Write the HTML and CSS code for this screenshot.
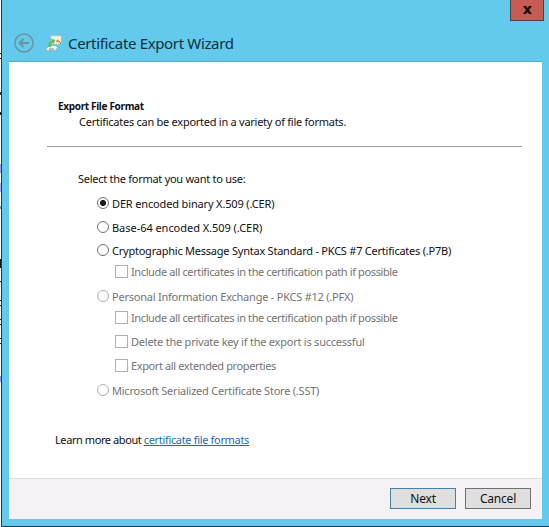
FILE: index.html
```
<!DOCTYPE html>
<html lang="en">
<head>
    <meta charset="UTF-8">
    <meta name="viewport" content="width=device-width, initial-scale=1.0">
    <title>Certificate Export Wizard</title>
    <link rel="stylesheet" href="styles.css">
</head>
<body>

<div class="window">
    <!-- Title bar -->
    <header class="titlebar">
        <button class="close" aria-label="Close">
            <svg width="9" height="8" viewBox="0 0 9 8"><path d="M0 0h3l1.5 2L6 0h3L6 4l3 4H6L4.500 6 3 8H0l3-4z" fill="#1a0c0e"/></svg>
        </button>
        <div class="caption">
            <svg class="back" width="20" height="20" viewBox="0 0 20 20" fill="none" stroke="#6f929f">
                <circle cx="10" cy="10" r="9" stroke-width="1.5"/>
                <path d="M15 10H6M9.500 6L5.500 10l4 4" stroke-width="2.200"/>
            </svg>
            <svg class="cert" width="17" height="17" viewBox="0 0 17 17">
                <path d="M6 1h10v8H6z" fill="#f8f5e4" stroke="#d6d4b4" stroke-width=".6"/>
                <path d="M1 14.500l3-4h6l3 2-3 3H2z" fill="#f0f3ea" stroke="#8ba9a2" stroke-width=".6"/>
                <path d="M3 11.500C3.500 8.500 4.500 7 6.500 5.500L6 4l4 1-1.500 4-1-1.500C6 9 6 10 6 12z" fill="#5dc060" stroke="#5dc060" stroke-width=".5"/>
                <circle cx="12.500" cy="6" r="1.500" fill="#e39a3c"/>
                <path d="M14 6l2 3" stroke="#7c6c64"/>
                <path d="M4 14h5" stroke="#6d8791"/>
            </svg>
            <h1>Certificate Export Wizard</h1>
        </div>
    </header>

    <main class="page">
        <h2>Export File Format</h2>
        <p class="subtitle">Certificates can be exported in a variety of file formats.</p>
        <hr>
        <p class="prompt">Select the format you want to use:</p>

        <!-- Export formats -->
        <form class="formats">
            <label class="option der"><input type="radio" name="format" checked><span>DER encoded binary X.509 (.CER)</span></label>
            <label class="option base64"><input type="radio" name="format"><span>Base-64 encoded X.509 (.CER)</span></label>
            <label class="option pkcs7"><input type="radio" name="format"><span>Cryptographic Message Syntax Standard - PKCS #7 Certificates (.P7B)</span></label>
            <label class="option sub include"><input type="checkbox" disabled><span>Include all certificates in the certification path if possible</span></label>
            <label class="option pfx disabled"><input type="radio" name="format" disabled><span>Personal Information Exchange - PKCS #12 (.PFX)</span></label>
            <label class="option sub include"><input type="checkbox" disabled><span>Include all certificates in the certification path if possible</span></label>
            <label class="option sub delete"><input type="checkbox" disabled><span>Delete the private key if the export is successful</span></label>
            <label class="option sub extended"><input type="checkbox" disabled><span>Export all extended properties</span></label>
            <label class="option sst disabled"><input type="radio" name="format" disabled><span>Microsoft Serialized Certificate Store (.SST)</span></label>
        </form>

        <p class="learn">Learn more about <a href="#">certificate file formats</a></p>
    </main>

    <footer class="buttons">
        <button class="btn default">Next</button>
        <button class="btn">Cancel</button>
    </footer>
</div>

</body>
</html>
```
FILE: styles.css
```
* {
    box-sizing: border-box;
}
body {
    margin: 0;
    height: 527px;
    padding-left: 1px;
    overflow: hidden;
    font-family: "Noto Sans", sans-serif;
    font-size: 11px;
    color: #101014;
    /* edge of the window that lies behind the dialog */
    background: linear-gradient(#fff 53px, #222 53px 54px, #fff 54px 58px, #222 58px 59px, #fff 59px 92px, #333 92px 95px, #fff 95px 112px, #222 112px 115px, #fff 115px 164px, #9aa9d8 164px 173px, #fff 173px 183px, #a9b3e0 183px 192px, #fff 192px 206px, #6f9fc0 206px 209px, #fff 209px 259px, #14141c 259px 268px, #fff 268px 281px, #222 281px 282px, #fff 282px 300px, #222 300px 301px, #fff 301px 305px, #222 305px 306px, #fff 306px 319px, #222 319px 320px, #fff 320px 324px, #222 324px 325px, #fff 325px 338px, #222 338px 339px, #fff 339px 343px, #222 343px 344px, #fff 344px 376px, #86a3e0 376px 382px, #fff 382px);
}
h1, h2, p {
    margin: 0;
    font-weight: normal;
    white-space: nowrap;
}
.window {
    height: 527px;
    display: flex;
    flex-direction: column;
    padding: 0 7px 7px;
    background-color: #63caed;
    border-left: 1px solid #163e4c;
    border-bottom: 1px solid #163e4c;
}
.titlebar {
    height: 62px;
    display: flex;
    flex-direction: column;
    border-bottom: 1px solid #67a5bc;
}
.close {
    align-self: flex-end;
    width: 34px;
    height: 21px;
    margin-right: -2px;
    padding: 0;
    display: flex;
    justify-content: center;
    align-items: center;
    background-color: #c75b56;
    border: 1px solid #53404a;
    border-top: none;
}
.caption {
    display: flex;
    align-items: center;
    height: 40px;
    padding: 4px 0 0 5px;
}
.cert {
    margin-left: 11px;
}
h1 {
    margin-left: 6px;
    font-size: 15px;
    line-height: 22px;
    letter-spacing: -0.35px;
    color: #10303d;
}
.page {
    height: 416px;
    padding-top: 35px;
    background-color: #fff;
}
h2 {
    margin-left: 49px;
    font-size: 10px;
    font-weight: bold;
    line-height: 18px;
    letter-spacing: -0.33px;
}
.subtitle {
    margin: -1px 0 0 70px;
    line-height: 16px;
    letter-spacing: -0.26px;
}
hr {
    width: 475px;
    height: 1px;
    margin: 16px 0 0 38px;
    border: none;
    background-color: #9b9b9b;
}
.prompt {
    margin: 22px 0 0 69px;
    line-height: 20px;
    letter-spacing: -0.27px;
}
.formats {
    display: flex;
    flex-direction: column;
    margin: 4px 0 0 88px;
}
.option {
    display: flex;
    align-items: center;
    height: 20px;
    white-space: nowrap;
    letter-spacing: -0.23px;
}
.option input {
    appearance: none;
    flex: none;
    width: 12px;
    height: 12px;
    margin: 0 3px 0 0;
    border: 1px solid #707070;
    border-radius: 50%;
    background-color: #fff;
}
.option input:checked {
    background: radial-gradient(circle, #1c1c1c 2.7px, #fff 3.4px);
}
.option.sub input {
    width: 13px;
    height: 13px;
    border-radius: 0;
}
.option input:disabled {
    border-color: #b0b0b0;
}
.sub {
    margin-left: 18px;
}
.sub, .disabled {
    color: #747474;
}
.base64, .delete, .extended {
    margin-top: 4px;
}
.pkcs7 {
    margin-top: 3px;
}
.include {
    margin-top: 1px;
}
.pfx, .sst {
    margin-top: 5px;
}
.der {
    letter-spacing: -0.15px;
}
.base64 {
    letter-spacing: -0.04px;
}
.include, .extended {
    letter-spacing: -0.38px;
}
.learn {
    margin: 30px 0 0 46px;
    line-height: 20px;
    letter-spacing: -0.42px;
}
.learn a {
    color: #1c6bb5;
    letter-spacing: -0.33px;
}
.buttons {
    height: 41px;
    display: flex;
    justify-content: flex-end;
    gap: 9px;
    padding: 9px 11px 0 0;
    background-color: #f5f2f6;
    border-top: 1px solid #dcdcde;
}
.btn {
    width: 66px;
    height: 21px;
    padding: 0;
    font-family: inherit;
    font-size: 12px;
    line-height: 18px;
    letter-spacing: -0.2px;
    color: #101014;
    background-color: #dfdfe0;
    border: 1px solid #707070;
}
.btn.default {
    border-color: #4580a8;
}
```
